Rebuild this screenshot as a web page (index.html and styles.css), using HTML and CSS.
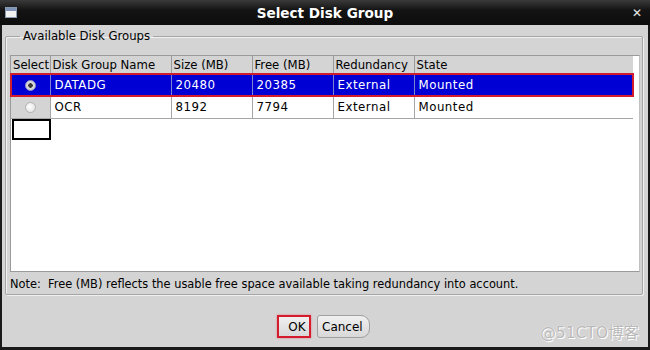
FILE: index.html
```html
<!DOCTYPE html>
<html lang="en">
<head>
  <meta charset="UTF-8">
  <title>Select Disk Group</title>
  <link rel="stylesheet" href="styles.css">
</head>
<body>
  <div class="window">
    <div class="titlebar">
      <span class="win-icon"><span class="win-icon-bar"></span></span>
      <span class="title">Select Disk Group</span>
      <span class="close">&#x2715;</span>
    </div>
    <div class="content">
      <fieldset class="group">
        <legend>Available Disk Groups</legend>
        <div class="table-box">
          <table class="grid">
            <thead>
              <tr>
                <th class="c-sel">Select</th>
                <th class="c-name">Disk Group Name</th>
                <th class="c-size">Size (MB)</th>
                <th class="c-free">Free (MB)</th>
                <th class="c-red">Redundancy</th>
                <th>State</th>
              </tr>
            </thead>
            <tbody>
              <tr class="selected">
                <td class="radio-cell"><span class="radio checked"></span></td>
                <td>DATADG</td>
                <td>20480</td>
                <td>20385</td>
                <td>External</td>
                <td>Mounted</td>
              </tr>
              <tr>
                <td class="radio-cell"><span class="radio"></span></td>
                <td>OCR</td>
                <td>8192</td>
                <td>7794</td>
                <td>External</td>
                <td>Mounted</td>
              </tr>
            </tbody>
          </table>
          <div class="focus-cell"></div>
        </div>
        <p class="note">Note:&nbsp; Free (MB) reflects the usable free space available taking redundancy into account.</p>
      </fieldset>
      <div class="buttons">
        <button class="btn ok">OK</button>
        <button class="btn cancel">Cancel</button>
        <span class="watermark">@51CTO博客</span>
      </div>
    </div>
  </div>
</body>
</html>
```

FILE: styles.css
```css
* {
  box-sizing: border-box;
}
body {
  margin: 0;
  font-family: 'DejaVu Sans', 'Noto Sans CJK SC', sans-serif;
  font-size: 11.4px;
  color: #000;
}
.window {
  width: 650px;
  height: 350px;
  background: #d4d4d4;
  border-left: 2px solid #1a1a1a;
  border-right: 2px solid #1a1a1a;
  border-bottom: 3px solid #1a1a1a;
  display: flex;
  flex-direction: column;
}
.titlebar {
  height: 25px;
  margin: 0 -2px;
  background: linear-gradient(#3a3a3a, #141414 40%, #0c0c0c);
  display: flex;
  align-items: center;
  padding: 0 8px 0 5px;
}
.win-icon {
  width: 12px;
  height: 11px;
  background: #f2f2f2;
  border: 1px solid #8a9ab0;
}
.win-icon-bar {
  display: block;
  height: 3px;
  background: #7d94b8;
}
.title {
  flex: 1;
  text-align: center;
  color: #fff;
  font-weight: bold;
  font-size: 13.6px;
  padding-left: 1px;
}
.close {
  color: #e8e8e8;
  font-size: 12px;
  font-weight: bold;
}
.content {
  flex: 1;
  display: flex;
  flex-direction: column;
  padding: 4px 5px 0 3px;
}
.group {
  margin: 0;
  padding: 12px 2px 3px 4px;
  border: 1px solid #a6a6a6;
  box-shadow: inset 1px 1px 0 #f0f0f0, 1px 1px 0 #f0f0f0;
  border-radius: 2px;
  height: 266px;
  display: flex;
  flex-direction: column;
}
.group legend {
  padding: 0 3px;
  margin-left: 10px;
  font-size: 11.7px;
}
.table-box {
  height: 217px;
  background: #fff;
  border: 1px solid #9a9a9a;
  border-right-color: #c0c0c0;
}
.grid {
  width: 622px;
  border-collapse: collapse;
  table-layout: fixed;
}
.grid th {
  background: #d4d4d4;
  font-weight: normal;
  text-align: left;
  height: 18px;
  padding: 0 2px;
  border-right: 1px solid #9a9a9a;
  border-bottom: 1px solid #a0a0a0;
  white-space: nowrap;
  font-size: 11.7px;
}
.grid th:last-child {
  border-right: none;
}
.grid td {
  height: 22px;
  padding: 0 4px;
  border-right: 1px solid #a6a6a6;
  border-bottom: 1px solid #a6a6a6;
  letter-spacing: 0.5px;
  font-size: 11.8px;
}
.grid td:last-child {
  border-right: none;
}
.c-sel { width: 39px; }
.c-name { width: 121px; }
.c-size { width: 81px; }
.c-free { width: 81px; }
.c-red { width: 81px; }
.grid .radio-cell {
  background: #d4d4d4;
  text-align: center;
  padding: 0;
}
.grid .selected td {
  background: #0000d4;
  color: #fff;
  border-right-color: #8080d0;
  border-bottom: none;
}
.selected {
  outline: 2px solid #d01c2c;
  outline-offset: -1px;
}
.radio {
  display: inline-block;
  width: 11px;
  height: 11px;
  border-radius: 50%;
  background: radial-gradient(circle at 40% 40%, #ffffff, #dcdcdc);
  border: 1px solid #b0b0b0;
  vertical-align: middle;
}
.radio.checked {
  background: radial-gradient(circle, #3a3a3a 0 2px, #d8d8d8 2.5px);
  border-color: #9090c0;
}
.focus-cell {
  width: 39px;
  height: 21px;
  margin-left: 1px;
  border: 2px solid #000;
  background: #fff;
}
.note {
  margin: 0;
  padding: 5px 0 0 0;
}
.buttons {
  display: flex;
  align-items: center;
  padding: 20px 0 0 272px;
  gap: 6px;
  position: relative;
}
.btn {
  font-family: 'DejaVu Sans', sans-serif;
  font-size: 12px;
  height: 23px;
  background: linear-gradient(#f0f0f0, #d8d8d8);
  border: 1px solid #a0a0a0;
  border-radius: 3px 9px 9px 3px;
  padding: 0 6px 0 4px;
  color: #000;
}
.btn.ok {
  width: 34px;
  padding: 0 3px 0 9px;
  border: 2px solid #d41c2c;
  border-radius: 0;
  box-shadow: 0 0 2px #e08090;
}
.watermark {
  position: absolute;
  right: 4px;
  top: 25px;
  font-size: 15.5px;
  color: #b8b8b8;
  text-shadow: 0 0 1px #fff, 1px 1px 0 #fff;
}
```
